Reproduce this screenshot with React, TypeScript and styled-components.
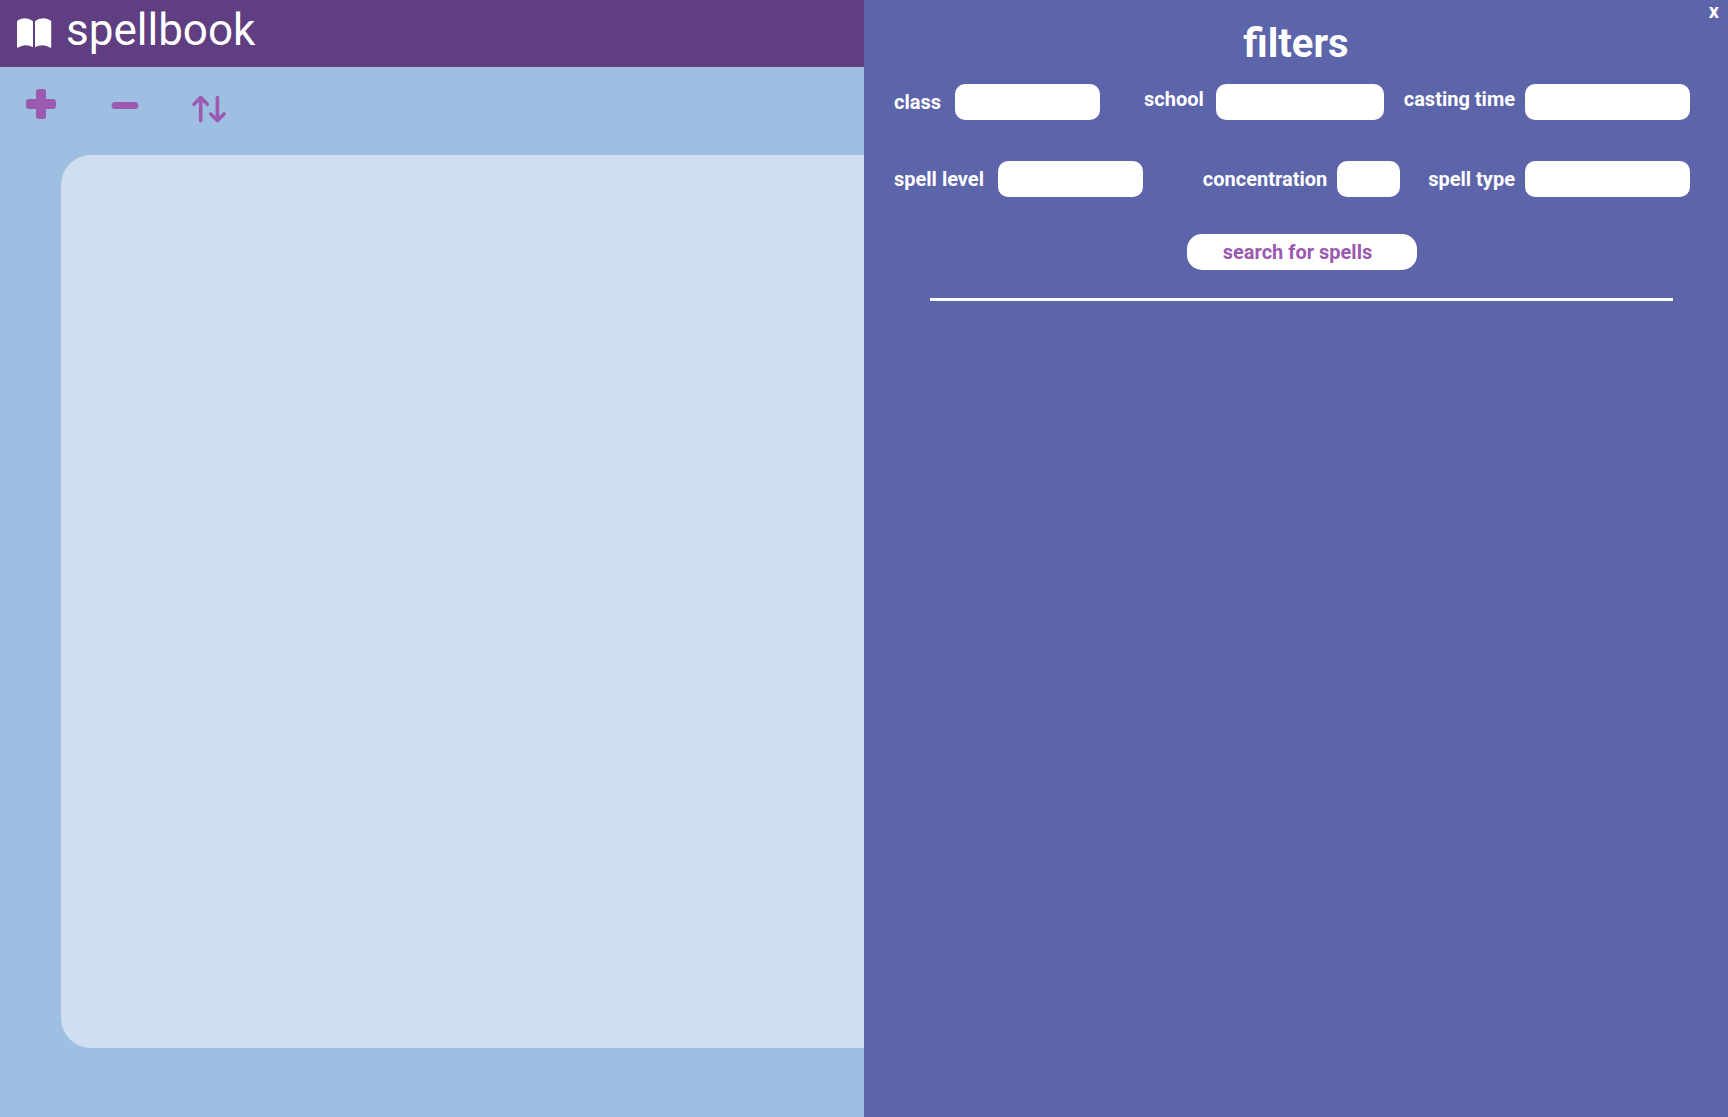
import React from "react";
import styled, { createGlobalStyle } from "styled-components";

const GlobalStyle = createGlobalStyle`
  *, *::before, *::after { box-sizing: border-box; }
  body {
    margin: 0;
    font-family: Roboto, "Liberation Sans", sans-serif;
    background: #9ebfe2;
  }
  button, input { font: inherit; border: 0; }
`;

const Page = styled.div`
  display: grid;
  grid-template-columns: minmax(0, 1fr) minmax(0, 1fr);
  min-height: 100vh;
`;

const Book = styled.main`
  display: flex;
  flex-direction: column;
  background: #9ebfe2;
`;

const Header = styled.header`
  display: flex;
  align-items: flex-start;
  gap: 14px;
  height: 67px;
  padding: 0 16px;
  background: #603e82;
  color: #fff;
`;

const BookIcon = styled.svg`
  flex: none;
  width: 36px;
  height: 67px;
`;

const Brand = styled.h1`
  margin: 0;
  font-size: 44px;
  font-weight: 400;
  line-height: 60px;
`;

const Toolbar = styled.div`
  display: flex;
  gap: 40px;
  height: 88px;
  padding: 15px 19px 0;
`;

const ToolButton = styled.button`
  width: 44px;
  height: 44px;
  padding: 0;
  background: none;
  color: #9b59b0;
  cursor: pointer;

  svg { display: block; }
`;

const SpellList = styled.section`
  flex: 1;
  margin: 0 0 69px 61px;
  border-radius: 30px 0 0 30px;
  background: #cfdef1;
`;

const Filters = styled.aside`
  position: relative;
  background: #5c64aa;
  color: #fff;
`;

const CloseButton = styled.button`
  position: absolute;
  top: 0;
  right: 0;
  padding: 0 9px;
  background: none;
  color: #fff;
  font-size: 20px;
  font-weight: 700;
  line-height: 22px;
  cursor: pointer;
`;

const Title = styled.h2`
  margin: 0;
  padding: 20px 0 16px;
  font-size: 40px;
  font-weight: 700;
  line-height: 48px;
  text-align: center;
`;

const FilterRow = styled.div`
  display: flex;
  justify-content: flex-end;
  margin-bottom: 41px;
  padding: 0 38px 0 30px;
`;

const Field = styled.label<{ $gap: number; $before?: number; $align?: string }>`
  display: flex;
  align-items: ${(p) => p.$align ?? "center"};
  gap: ${(p) => p.$gap}px;
  margin-left: ${(p) => p.$before ?? 0}px;
  font-size: 20px;
  font-weight: 700;
  line-height: 30px;
  white-space: nowrap;

  &:first-child { margin-right: auto; }
`;

const TextBox = styled.input<{ $width: number }>`
  width: ${(p) => p.$width}px;
  height: 36px;
  padding: 0 10px;
  border-radius: 10px;
  background: #fff;
  color: #603e82;
`;

const Actions = styled.div`
  display: flex;
  flex-direction: column;
  align-items: center;
  gap: 28px;
  margin-top: -4px;
  padding: 0 55px 0 66px;
`;

const SearchButton = styled.button`
  width: 230px;
  height: 36px;
  padding: 0 8px 0 0;
  border-radius: 15px;
  background: #fff;
  color: #9b59b0;
  font-size: 20px;
  font-weight: 700;
  line-height: 30px;
  cursor: pointer;
`;

const Divider = styled.hr`
  width: 100%;
  height: 3px;
  margin: 0;
  border: 0;
  background: #fff;
`;

export default function App() {
  return (
    <>
      <GlobalStyle />
      <Page>
        <Book>
          <Header>
            <BookIcon viewBox="0 0 36 67" fill="currentColor" aria-hidden="true">
              <path d="M1 22.2Q1 21 2 20.3Q5 18.2 9 18.2Q13.500 18.200 17 21.300V47.200Q13 45 9 45.200Q5.500 45.300 2.200 47.600Q1 48.200 1 46.800Z" />
              <path d="M35.200 22.200Q35.200 21 34.200 20.300Q31.200 18.200 27.200 18.200Q22.500 18.200 19 21.300V47.200Q23 45 27.200 45.200Q30.700 45.300 34 47.600Q35.200 48.200 35.200 46.800Z" />
            </BookIcon>
            <Brand>spellbook</Brand>
          </Header>
          <Toolbar>
            <ToolButton aria-label="Add spell">
              <svg width="44" height="44" fill="currentColor">
                <rect x="17" y="7" width="10" height="30" rx="3" />
                <rect x="7" y="17" width="30" height="10" rx="3" />
              </svg>
            </ToolButton>
            <ToolButton aria-label="Remove spell">
              <svg width="44" height="44" fill="currentColor">
                <rect x="8.600" y="20" width="26.800" height="7" rx="3.500" />
              </svg>
            </ToolButton>
            <ToolButton aria-label="Sort spells">
              <svg
                width="44"
                height="44"
                fill="none"
                stroke="currentColor"
                strokeWidth="3.6"
                strokeLinecap="round"
                strokeLinejoin="round"
              >
                <path d="M13.700 38.600V15.600M7 22.300L13.700 15.600L20.400 22.300" />
                <path d="M30.400 15.600V38.600M23.700 31.900L30.400 38.600L37.100 31.900" />
              </svg>
            </ToolButton>
          </Toolbar>
          <SpellList aria-label="Spells" />
        </Book>

        <Filters>
          <CloseButton aria-label="Close filters">x</CloseButton>
          <Title>filters</Title>
          <form onSubmit={(e) => e.preventDefault()}>
            <FilterRow>
              <Field $gap={14}>
                class
                <TextBox $width={145} name="class" />
              </Field>
              <Field $gap={12} $align="flex-start">
                school
                <TextBox $width={168} name="school" />
              </Field>
              <Field $gap={10} $before={20} $align="flex-start">
                casting time
                <TextBox $width={165} name="castingTime" />
              </Field>
            </FilterRow>
            <FilterRow>
              <Field $gap={14}>
                spell level
                <TextBox $width={145} name="spellLevel" />
              </Field>
              <Field $gap={10}>
                concentration
                <TextBox $width={63} name="concentration" />
              </Field>
              <Field $gap={10} $before={28}>
                spell type
                <TextBox $width={165} name="spellType" />
              </Field>
            </FilterRow>
            <Actions>
              <SearchButton type="submit">search for spells</SearchButton>
              <Divider />
            </Actions>
          </form>
        </Filters>
      </Page>
    </>
  );
}
